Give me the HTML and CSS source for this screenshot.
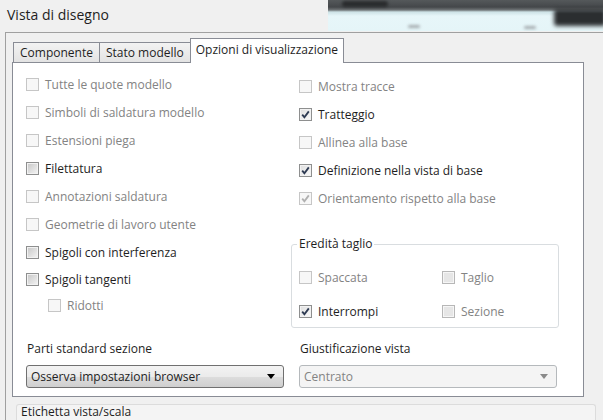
FILE: index.html
```html
<!DOCTYPE html>
<html lang="it">
<head>
  <meta charset="UTF-8">
  <title>Vista di disegno</title>
  <link rel="stylesheet" href="styles.css">
</head>
<body>
  <div class="titlebar">
    <h1 class="title">Vista di disegno</h1>
    <div class="thumb">
      <span class="blot blot-top"></span>
      <span class="blot blot-right"></span>
      <span class="blot blot-dot1"></span>
      <span class="blot blot-dot2"></span>
    </div>
  </div>

  <div class="frame">
    <div class="tabs">
      <span class="tab">Componente</span>
      <span class="tab">Stato modello</span>
      <span class="tab active">Opzioni di visualizzazione</span>
    </div>

    <div class="panel">
      <div class="cols">
        <div class="col col-left">
          <div class="check off"><span class="box"></span>Tutte le quote modello</div>
          <div class="check off"><span class="box"></span>Simboli di saldatura modello</div>
          <div class="check off"><span class="box"></span>Estensioni piega</div>
          <div class="check"><span class="box"></span>Filettatura</div>
          <div class="check off"><span class="box"></span>Annotazioni saldatura</div>
          <div class="check off"><span class="box"></span>Geometrie di lavoro utente</div>
          <div class="check"><span class="box"></span>Spigoli con interferenza</div>
          <div class="check tight"><span class="box"></span>Spigoli tangenti</div>
          <div class="check off sub tight"><span class="box"></span>Ridotti</div>
        </div>

        <div class="col col-right">
          <div class="check off"><span class="box"></span>Mostra tracce</div>
          <div class="check on"><span class="box"><svg viewBox="0 0 11 11"><path d="M2.2 5.6 L4.4 8.2 L8.8 2.4"/></svg></span>Tratteggio</div>
          <div class="check off"><span class="box"></span>Allinea alla base</div>
          <div class="check on"><span class="box"><svg viewBox="0 0 11 11"><path d="M2.2 5.6 L4.4 8.2 L8.8 2.4"/></svg></span>Definizione nella vista di base</div>
          <div class="check off on"><span class="box"><svg viewBox="0 0 11 11"><path d="M2.2 5.6 L4.4 8.2 L8.8 2.4"/></svg></span>Orientamento rispetto alla base</div>

          <fieldset class="group">
            <legend>Eredità taglio</legend>
            <div class="group-grid">
              <div class="check off"><span class="box"></span>Spaccata</div>
              <div class="check off dim"><span class="box"></span>Taglio</div>
              <div class="check on"><span class="box"><svg viewBox="0 0 11 11"><path d="M2.2 5.6 L4.4 8.2 L8.8 2.4"/></svg></span>Interrompi</div>
              <div class="check off dim"><span class="box"></span>Sezione</div>
            </div>
          </fieldset>
        </div>
      </div>

      <div class="selects">
        <div class="field">
          <label>Parti standard sezione</label>
          <div class="dropdown">Osserva impostazioni browser<span class="arrow"></span></div>
        </div>
        <div class="field">
          <label>Giustificazione vista</label>
          <div class="dropdown disabled">Centrato<span class="arrow"></span></div>
        </div>
      </div>
    </div>

    <div class="subgroup">Etichetta vista/scala</div>
  </div>
</body>
</html>
```

FILE: styles.css
```css
body {
  margin: 0;
  width: 603px;
  height: 420px;
  overflow: hidden;
  background: #f0f0f0;
  font-family: "Open Sans", "Noto Sans", sans-serif;
  font-size: 12px;
  color: #1e1e1e;
}

.titlebar {
  display: flex;
  height: 32px;
}

.title {
  margin: 0;
  padding: 6px 0 0 7px;
  font-size: 14px;
  font-weight: normal;
  line-height: 18px;
}

.thumb {
  margin-left: auto;
  width: 275px;
  height: 31px;
  position: relative;
  overflow: hidden;
  background: linear-gradient(#55595b 0, #44474a 7px, #6f7476 10px, #cde2e6 12px, #e7f6f9 16px, #e5f5f8 100%);
}

.blot {
  position: absolute;
  background: #2a2c2e;
  filter: blur(1.5px);
  border-radius: 3px;
}

.blot-top {
  left: 14px;
  top: 1px;
  width: 46px;
  height: 6px;
}

.blot-right {
  left: 226px;
  top: 9px;
  width: 52px;
  height: 17px;
  background: #2b2e30;
  filter: blur(2px);
}

.blot-dot1 {
  left: 80px;
  top: 25px;
  width: 12px;
  height: 3px;
  background: #a5acaf;
}

.blot-dot2 {
  left: 196px;
  top: 26px;
  width: 12px;
  height: 3px;
  background: #a5acaf;
}

.frame {
  margin-left: 5px;
  border-top: 1px solid #a0a0a0;
  border-left: 1px solid #a0a0a0;
  padding: 5px 0 0 6px;
}

.tabs {
  display: flex;
  align-items: flex-end;
  height: 24px;
  padding-left: 1px;
}

.tab {
  height: 20px;
  box-sizing: border-box;
  padding: 0 6px;
  line-height: 19px;
  border: 1px solid #898c95;
  border-bottom: none;
  margin-right: -1px;
  background: linear-gradient(#f3f3f3, #e3e3e3);
}

.tab.active {
  position: relative;
  z-index: 1;
  height: 25px;
  margin-bottom: -1px;
  margin-left: 0;
  padding: 0 5px;
  line-height: 22px;
  background: #fff;
}

.panel {
  width: 572px;
  height: 335px;
  box-sizing: border-box;
  border: 1px solid #898c95;
  background: #fff;
  display: flex;
  flex-direction: column;
  padding: 7px 0 8px 13px;
}

.cols {
  display: flex;
}

.col-left {
  width: 273px;
}

.col-right {
  padding-top: 2px;
}

.check {
  display: flex;
  align-items: center;
  gap: 6px;
  height: 28px;
}

.check.tight {
  height: 26px;
}

.check.sub {
  padding-left: 22px;
}

.check.off {
  color: #838383;
}

.box {
  width: 13px;
  height: 13px;
  box-sizing: border-box;
  border: 1px solid #8e8f8f;
  background: linear-gradient(135deg, #c6c6c6, #f5f5f5);
  box-shadow: inset 0 0 0 1px #f2f2f2;
  display: flex;
  align-items: center;
  justify-content: center;
}

.check.on .box {
  background: linear-gradient(135deg, #dedede, #fafafa);
}

.check.off .box {
  border-color: #c6c6c6;
  background: #f7f7f7;
  box-shadow: none;
}

.check.off.dim .box {
  border-color: #b7b7b7;
  background: #e6e6e6;
  box-shadow: inset 0 0 0 1px #f6f6f6;
}

.box svg {
  width: 11px;
  height: 11px;
  fill: none;
  stroke: #2d3a52;
  stroke-width: 1.8;
}

.check.off .box svg {
  stroke: #b0b0b0;
}

.group {
  margin: 24px 0 0 -8px;
  width: 268px;
  box-sizing: border-box;
  padding: 13px 7px 4px;
  border: 1px solid #d9dde0;
  border-radius: 3px;
  min-width: 0;
}

.group legend {
  padding: 0 2px;
  margin-left: -2px;
  line-height: 16px;
}

.group-grid {
  display: grid;
  grid-template-columns: 143px auto;
  row-gap: 10px;
}

.group-grid .check {
  height: 24px;
}

.selects {
  margin-top: auto;
  display: grid;
  grid-template-columns: 258px 258px;
  column-gap: 15px;
}

.field label {
  display: block;
  line-height: 16px;
  margin: 0 0 8px 1px;
}

.dropdown {
  height: 23px;
  box-sizing: border-box;
  border: 1px solid #707070;
  border-radius: 3px;
  background: linear-gradient(#f3f3f3 0, #ebebeb 50%, #dddddd 51%, #cfcfcf 100%);
  display: flex;
  align-items: center;
  justify-content: space-between;
  padding: 0 8px 0 4px;
}

.arrow {
  width: 0;
  height: 0;
  border-left: 4px solid transparent;
  border-right: 4px solid transparent;
  border-top: 5px solid #000;
}

.dropdown.disabled {
  border-color: #b5b9bc;
  background: #f4f4f4;
  color: #838383;
}

.dropdown.disabled .arrow {
  border-top-color: #8a8a8a;
}

.subgroup {
  margin: 7px 0 0 4px;
  width: 580px;
  height: 20px;
  box-sizing: border-box;
  border: 1px solid #dcdcdc;
  border-bottom: none;
  border-radius: 3px 3px 0 0;
  background: #f4f4f4;
  padding-left: 4px;
  line-height: 14px;
}
```
